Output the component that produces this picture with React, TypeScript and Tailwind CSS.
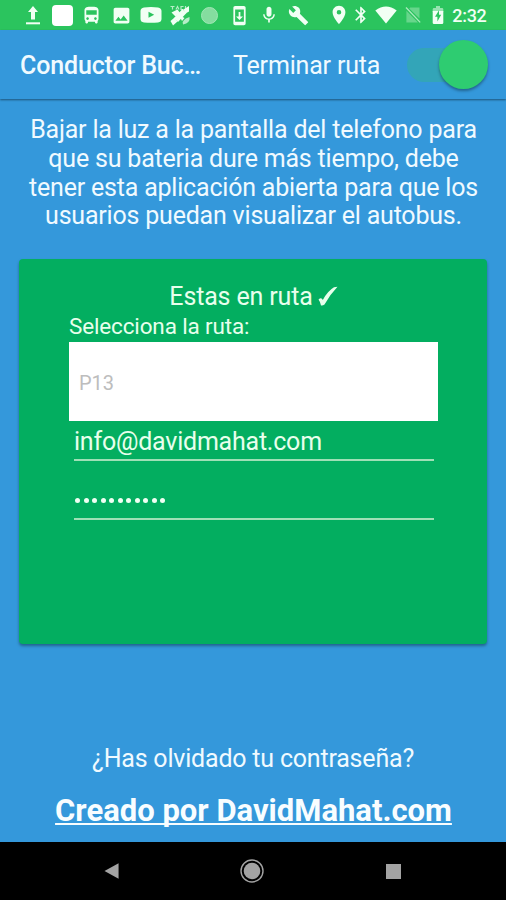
import React from "react";
import { MdDirectionsBus, MdImage, MdMic, MdBuild, MdPlace, MdBluetooth, MdSystemUpdate } from "react-icons/md";

function Slot({ className, children }: { className: string; children: React.ReactNode }) {
  return <div className={`flex h-[30px] shrink-0 items-center justify-center ${className}`}>{children}</div>;
}

function UploadIcon() {
  return (
    <svg width="16" height="20" viewBox="0 0 16 20" fill="currentColor">
      <path d="M8 1 L13 7 H10 V14.5 H6 V7 H3 Z" />
      <rect x="1" y="17.3" width="14" height="2" />
    </svg>
  );
}

function YoutubeIcon() {
  return (
    <svg width="22" height="16" viewBox="0 0 22 16" fill="currentColor" fillRule="evenodd">
      <path d="M4 .5 Q11 -.3 18 .5 Q21.5 1 21.5 4 V12 Q21.5 15 18 15.5 Q11 16.2 4 15.5 Q.5 15 .5 12 V4 Q.5 1 4 .5 Z M8.5 4.8 V10.8 L14.2 7.8 Z" />
    </svg>
  );
}

function SatelliteIcon() {
  return (
    <svg width="22" height="22" viewBox="0 0 22 22" fill="currentColor">
      <path d="M1.5 2.5h4M3.5 2.5v3M7 5.5l1.5-3L10 5.5M14.5 2.5H12v3h2.5M16.5 2v3" stroke="currentColor" strokeWidth="1.2" fill="none" opacity=".7" />
      <path d="M2.5 8.5 L8.5 5.5 L11.5 9.5 L6.5 12.5 Z" />
      <path d="M14.5 5.5 L20 2 L20 7.5 L16.5 9.5 Z" />
      <path d="M13.5 5 L17.5 9 L9 18 L5 14 Z" />
      <path d="M1.5 17 L5.5 13.5 L8.5 17.5 L4 21.5 Z" />
      <path d="M10 11 L15.5 14 L13 17 Z" />
      <path d="M20.5 13 Q21.5 19 14 20.5 Q12 16 20.5 13Z" opacity=".7" />
    </svg>
  );
}

function WifiIcon() {
  return (
    <svg width="22" height="18" viewBox="0 0 22 18" fill="currentColor">
      <path d="M11 17.5 L.3 4.6 Q11 -3.4 21.7 4.6 Z" />
    </svg>
  );
}

function NoSimIcon() {
  return (
    <svg width="16" height="18" viewBox="0 0 16 18" fill="currentColor">
      <path d="M5.2 1.5 H14.5 V12.6 L4.2 2.4 Z M1.4 4.8 L13 16.4 H1.4 Z" opacity=".3" />
      <path d="M1 1.5 L15.2 16.4" stroke="currentColor" strokeWidth="1.3" opacity=".65" />
    </svg>
  );
}

function BatteryIcon() {
  return (
    <svg width="12" height="20" viewBox="0 0 12 20">
      <path d="M4 1 H8 V3 H10 Q11.3 3 11.3 4.3 V7 H.7 V4.3 Q.7 3 2 3 H4Z" fill="currentColor" opacity=".55" />
      <path d="M.7 6 H11.3 V17.8 Q11.3 19 10 19 H2 Q.7 19 .7 17.8Z" fill="currentColor" />
      <path d="M7 5.2 L3 11.8 H5.4 V16.6 L9.2 9.8 H7Z" fill="#2bc45e" />
    </svg>
  );
}

function StatusBar() {
  return (
    <div className="flex h-[30px] items-center bg-[#2bc45e] pl-[17.75px] text-[#f1fff4]">
      <Slot className="w-[29.5px]"><UploadIcon /></Slot>
      <Slot className="w-[29.5px]"><div className="size-[21px] rounded-[4px] bg-white" /></Slot>
      <Slot className="w-[29.5px]"><MdDirectionsBus size={21} /></Slot>
      <Slot className="w-[29.5px]"><MdImage size={21} /></Slot>
      <Slot className="w-[29.5px]"><YoutubeIcon /></Slot>
      <Slot className="w-[29.5px]"><SatelliteIcon /></Slot>
      <Slot className="w-[29.5px]"><div className="size-[17px] rounded-full border border-[#a0e7b5] bg-[#85dd9f]" /></Slot>
      <Slot className="w-[29.5px]"><MdSystemUpdate size={21} /></Slot>
      <Slot className="w-[29.5px]"><MdMic size={20} /></Slot>
      <Slot className="w-[29.5px]"><MdBuild size={21} /></Slot>
      <Slot className="ml-[13.5px] w-[25px]"><MdPlace size={22} /></Slot>
      <Slot className="w-5"><MdBluetooth size={22} /></Slot>
      <Slot className="w-[30px]"><WifiIcon /></Slot>
      <Slot className="w-6"><NoSimIcon /></Slot>
      <Slot className="w-[26px]"><BatteryIcon /></Slot>
      <span className="pl-px pt-0.5 text-[18px] leading-6 font-medium tracking-[-0.3px]">2:32</span>
    </div>
  );
}

export default function App() {
  return (
    <div className="flex h-[900px] w-[506px] flex-col overflow-hidden bg-[#3498db] font-['Roboto',sans-serif] text-[#f0faff]">
      <StatusBar />
      <header className="flex h-[69px] shrink-0 items-center pl-5 shadow-[0_1px_2px_rgba(0,0,0,0.45)]">
        <h1 className="w-[213px] pt-[3px] text-[25px] leading-7 font-medium tracking-[-0.15px] whitespace-nowrap">Conductor Buc…</h1>
        <span className="w-[174px] pt-[3px] text-[25px] leading-7 tracking-[-0.18px] whitespace-nowrap">Terminar ruta</span>
        <div className="flex h-[34px] w-[81px] items-center justify-end rounded-full bg-[#33a5b8]">
          <div className="size-[49px] shrink-0 rounded-full bg-[#2ecc71] shadow-[0_2px_3px_rgba(0,0,0,0.35)]" />
        </div>
      </header>

      <p className="mt-[17px] ml-px text-center text-[25px] leading-[28.8px] tracking-[-0.2px] whitespace-nowrap">
        Bajar la luz a la pantalla del telefono para<br />
        que su bateria dure más tiempo, debe<br />
        tener esta aplicación abierta para que los<br />
        usuarios puedan visualizar el autobus.
      </p>

      <main className="mx-auto mt-7 flex h-[385px] w-[468px] shrink-0 flex-col rounded-[4px] bg-[#03ae60] pt-6 pr-[49px] pl-[50px] text-[#e8ffec] shadow-[0_2px_3px_rgba(0,0,0,0.35)]">
        <div className="flex h-7 items-center justify-center text-[25px] leading-7 tracking-[-0.15px]">
          <span>Estas en ruta</span>
          <svg className="ml-[5px]" width="20" height="22" viewBox="0 0 20 22" fill="currentColor">
            <path d="M.5 13.5 Q3.5 11 4.8 14 Q9.5 5 16 1.2 L19.5 .7 Q11.5 9 6.5 18.5 Q4.5 20 3 19.4 Q2.4 16 .5 13.5Z" />
          </svg>
        </div>
        <label className="mt-px block h-[30px] text-[22.5px] leading-7 tracking-[-0.15px]">Selecciona la ruta:</label>
        <div className="flex h-[79px] shrink-0 items-center bg-white pl-[10px] pt-0.5 text-[20px] text-[#bdbdbd]">P13</div>
        <div className="mr-1 ml-[5px] h-10 border-b-2 border-[#9fe0b6] pt-[7px] text-[25px] leading-7 tracking-[-0.22px]">info@davidmahat.com</div>
        <div className="mr-1 ml-[5px] flex h-[59px] items-center gap-[3.5px] border-b-2 border-[#9fe0b6] pt-[22px] pl-[1px]">
          {Array.from({ length: 11 }, (_, i) => (
            <span key={i} className="size-[5px] rounded-full bg-[#f0fff3]" />
          ))}
        </div>
      </main>

      <div className="mt-[101px] text-center text-[25px] leading-7 tracking-[-0.2px]">¿Has olvidado tu contraseña?</div>
      <div className="mt-[20px] ml-px text-center text-[31px] leading-9 font-bold text-[#f8fdff] underline decoration-2 underline-offset-2 [text-decoration-skip-ink:none]">Creado por DavidMahat.com</div>

      <nav className="mt-auto flex h-[58px] shrink-0 items-center justify-around bg-black pr-[44px] pl-[42px]">
        <svg className="ml-px" width="15" height="18" viewBox="0 0 16 18"><path d="M.5 9 L15.5 .8 V17.2Z" fill="#a3a3a3" /></svg>
        <svg width="24" height="24" viewBox="0 0 24 24">
          <circle cx="12" cy="12" r="11" fill="none" stroke="#a3a3a3" strokeWidth="1.4" />
          <circle cx="12" cy="12" r="8.3" fill="#a3a3a3" />
        </svg>
        <div className="size-[15px] bg-[#a3a3a3]" />
      </nav>
    </div>
  );
}
